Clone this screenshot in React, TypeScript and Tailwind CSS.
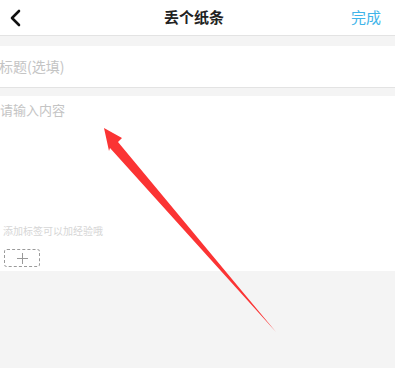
export default function App() {
  return (
    <div
      className="relative w-[395px] h-[368px] overflow-hidden bg-[#f4f4f4]"
      style={{ fontFamily: '"Noto Sans CJK SC", "Noto Sans", sans-serif' }}
    >
      <header className="h-[36px] bg-white border-b border-[#e3e3e3] flex items-center justify-between px-[8px]">
        <svg width="14" height="18" viewBox="0 0 14 18" className="ml-[1px]">
          <path d="M10 2 L3 9 L10 16" fill="none" stroke="#111" strokeWidth="2.6" strokeLinecap="round" strokeLinejoin="round" />
        </svg>
        <h1 className="text-[15px] font-bold text-[#222] ml-[14px]">丢个纸条</h1>
        <button className="text-[15px] text-[#3fb4e9] mr-[6px]">完成</button>
      </header>

      <div className="mt-[10px] h-[42px] bg-white border-b border-[#e3e3e3] flex items-center">
        <span className="text-[14px] text-[#c4c4c4] -ml-[1px]">标题(选填)</span>
      </div>

      <div className="mt-[8px] h-[175px] bg-white flex flex-col">
        <div className="pt-[4px] text-[13px] text-[#c4c4c4]">请输入内容</div>
        <div className="mt-auto pl-[3px] text-[10px] text-[#d6d6d6]">添加标签可以加经验哦</div>
        <div className="mt-[11px] mb-[4px] ml-[4px] w-[36px] h-[18px] rounded-[3px] border border-dashed border-[#9a9a9a] flex items-center justify-center">
          <svg width="11" height="11" viewBox="0 0 11 11">
            <path d="M5.5 0 V11 M0 5.5 H11" stroke="#999" strokeWidth="1" />
          </svg>
        </div>
      </div>

      <svg className="absolute left-0 top-0 pointer-events-none" width="395" height="368" viewBox="0 0 395 368">
        <polygon points="104,128 122,138 118,142 276,332 110,148 109,151" fill="#fb3434" />
      </svg>
    </div>
  );
}
